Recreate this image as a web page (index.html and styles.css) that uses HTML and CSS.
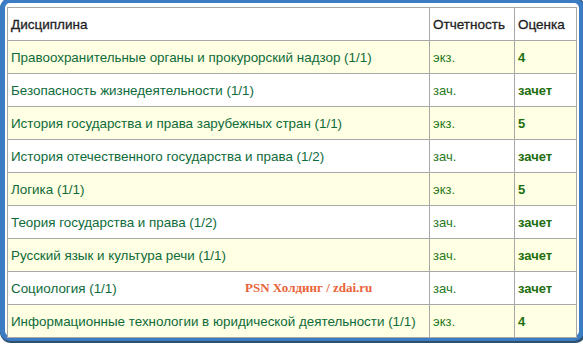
FILE: index.html
```
<!DOCTYPE html>
<html lang="ru">
<head>
<meta charset="utf-8">
<link rel="stylesheet" href="styles.css">
</head>
<body>
<div class="frame">
  <table class="grades">
    <colgroup><col class="c1"><col class="c2"><col class="c3"></colgroup>
    <thead>
      <tr><th>Дисциплина</th><th>Отчетность</th><th>Оценка</th></tr>
    </thead>
    <tbody>
      <tr class="odd"><td>Правоохранительные органы и прокурорский надзор (1/1)</td><td class="rep">экз.</td><td class="mark">4</td></tr>
      <tr><td>Безопасность жизнедеятельности (1/1)</td><td class="rep">зач.</td><td class="mark">зачет</td></tr>
      <tr class="odd"><td>История государства и права зарубежных стран (1/1)</td><td class="rep">экз.</td><td class="mark">5</td></tr>
      <tr><td>История отечественного государства и права (1/2)</td><td class="rep">зач.</td><td class="mark">зачет</td></tr>
      <tr class="odd"><td>Логика (1/1)</td><td class="rep">экз.</td><td class="mark">5</td></tr>
      <tr><td>Теория государства и права (1/2)</td><td class="rep">зач.</td><td class="mark">зачет</td></tr>
      <tr class="odd"><td>Русский язык и культура речи (1/1)</td><td class="rep">зач.</td><td class="mark">зачет</td></tr>
      <tr><td class="wm-cell">Социология (1/1)<span class="watermark">PSN Холдинг / zdai.ru</span></td><td class="rep">зач.</td><td class="mark">зачет</td></tr>
      <tr class="odd"><td>Информационные технологии в юридической деятельности (1/1)</td><td class="rep">экз.</td><td class="mark">4</td></tr>
    </tbody>
  </table>
</div>
</body>
</html>
```
FILE: styles.css
```
html, body {
  margin: 0;
  padding: 0;
  background: #ffffff;
}
body {
  width: 583px;
  height: 344px;
  overflow: hidden;
  font-family: "Liberation Sans", Arial, sans-serif;
}
.frame {
  margin-top: -2px;
  width: 572px;
  height: 329px;
  border: 5px solid #3b7cc2;
  border-radius: 10px;
  padding: 4px 0 0 2px;
  background: #ffffff;
  box-shadow: 1px 1px 0 1px #2f4f6e;
}
.grades {
  border-collapse: collapse;
  width: 570px;
  border: 1px solid #666666;
}
.c1 { width: 423px; }
.c2 { width: 85px; }
.c3 { width: 62px; }
.grades th, .grades td {
  border: 1px solid #a8a8a8;
  height: 32px;
  padding: 0 0 0 3px;
  text-align: left;
  font-size: 13.4px;
  vertical-align: middle;
}
.grades th {
  font-weight: normal;
  color: #1e1e1e;
  font-size: 13.5px;
  -webkit-text-stroke: 0.3px #1e1e1e;
}
.grades td {
  color: #0e6b3a;
}
.grades tr.odd td {
  background: #ffffe3;
}
.grades td.rep {
  font-size: 13px;
  color: #2a7a1e;
}
.grades td.mark {
  font-weight: bold;
  font-size: 13px;
  color: #1e6e10;
}
.wm-cell {
  position: relative;
}
.watermark {
  position: absolute;
  left: 237px;
  top: 8px;
  font-family: "Liberation Serif", "Times New Roman", serif;
  font-weight: bold;
  font-size: 13px;
  color: #e8643a;
}
```
